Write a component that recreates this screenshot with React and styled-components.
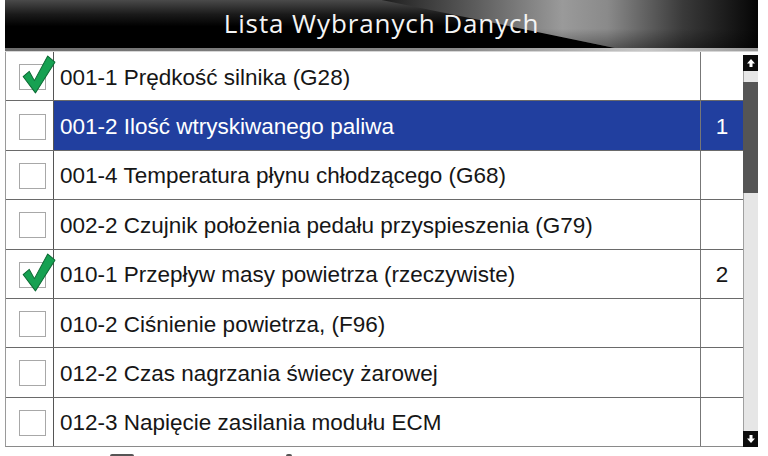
import { createGlobalStyle } from 'styled-components'
import styled from 'styled-components'

const rows = [
  { code: '001-1', name: 'Prędkość silnika (G28)', checked: true },
  { code: '001-2', name: 'Ilość wtryskiwanego paliwa', selected: true, order: '1' },
  { code: '001-4', name: 'Temperatura płynu chłodzącego (G68)' },
  { code: '002-2', name: 'Czujnik położenia pedału przyspieszenia (G79)' },
  { code: '010-1', name: 'Przepływ masy powietrza (rzeczywiste)', checked: true, order: '2' },
  { code: '010-2', name: 'Ciśnienie powietrza, (F96)' },
  { code: '012-2', name: 'Czas nagrzania świecy żarowej' },
  { code: '012-3', name: 'Napięcie zasilania modułu ECM' },
]

const GlobalStyle = createGlobalStyle`
  html, body {
    margin: 0;
    padding: 0;
    background: #ffffff;
  }
  * {
    box-sizing: border-box;
  }
`

const App = () => {
  return (
    <>
      <GlobalStyle />
      <Screen>
        <Header>
          <Title>Lista Wybranych Danych</Title>
        </Header>
        <HeaderRule />
        <Main>
          <Table>
            {rows.map((row) => (
              <Row key={row.code} selected={row.selected}>
                <CheckCell>
                  <Box />
                  {row.checked && (
                    <Tick viewBox="0 0 34 40">
                      <path
                        d="M2 21 L8 16 L13 25 L26 1 L33 7 L14 37 Z"
                        fill="#16a152"
                        stroke="#0c6b34"
                        strokeWidth="1"
                        strokeLinejoin="round"
                      />
                    </Tick>
                  )}
                </CheckCell>
                <NameCell>{row.code} {row.name}</NameCell>
                <OrderCell>{row.order}</OrderCell>
              </Row>
            ))}
          </Table>
          <Scrollbar>
            <ArrowButton>
              <svg width="10" height="10" viewBox="0 0 10 10">
                <path d="M5 1 L9 5.5 L6.5 5.5 L6.5 9 L3.5 9 L3.5 5.5 L1 5.5 Z" fill="#fff" />
              </svg>
            </ArrowButton>
            <Track>
              <Thumb />
            </Track>
            <ArrowButton>
              <svg width="10" height="10" viewBox="0 0 10 10">
                <path d="M5 9 L9 4.5 L6.5 4.5 L6.5 1 L3.5 1 L3.5 4.5 L1 4.5 Z" fill="#fff" />
              </svg>
            </ArrowButton>
          </Scrollbar>
        </Main>
        <Footer>
          <Peek width={24} />
          <Peek width={6} offset={176} />
        </Footer>
      </Screen>
    </>
  )
}

const Screen = styled.div`
  width: 768px;
  height: 456px;
  overflow: hidden;
  padding: 0 10px 0 5px;
  display: flex;
  flex-direction: column;
  font-family: 'Liberation Sans', Arial, sans-serif;
`

const Header = styled.div`
  position: relative;
  height: 48px;
  display: flex;
  align-items: center;
  justify-content: center;
  background: linear-gradient(180deg, #4a4a4a 0%, #1a1a1a 30%, #000 55%, #000 100%);
  &::before {
    content: '';
    position: absolute;
    inset: 0;
    clip-path: polygon(50% 0, 64% 45%, 81% 100%, 100% 100%, 100% 0);
    background:
      linear-gradient(180deg, rgba(0,0,0,0) 60%, rgba(0,0,0,0.35) 100%),
      linear-gradient(90deg, #1e1e1e 50%, #5a5a5a 62%, #9a9a9a 74%, #8a8a8a 80%, #3a3a3a 90%, #050505 100%);
  }
`

const Title = styled.h1`
  position: relative;
  margin: 0;
  padding-bottom: 2px;
  color: #f4f4f4;
  font-family: 'Open Sans', 'Noto Sans', sans-serif;
  font-weight: 400;
  font-size: 26px;
  letter-spacing: 0.9px;
`

const HeaderRule = styled.div`
  height: 4px;
  background: linear-gradient(90deg, #6e6e6e 0%, #8a8a8a 60%, #c8c8c8 85%, #9a9a9a 100%);
  border-bottom: 1px solid #d6d6d6;
`

const Main = styled.div`
  display: flex;
  height: 395px;
`

const Table = styled.div`
  flex: 1;
  display: flex;
  flex-direction: column;
  border-left: 1px solid #9a9a9a;
  border-bottom: 1px solid #8a8a8a;
`

const Row = styled.div`
  flex: 1;
  display: grid;
  grid-template-columns: 48px 647px 1fr;
  border-bottom: 1px solid #6a6a6a;
  background: ${({ selected }) => (selected ? '#213f9f' : '#ffffff')};
  color: ${({ selected }) => (selected ? '#ffffff' : '#161616')};
  &:last-child {
    border-bottom: none;
  }
`

const CheckCell = styled.div`
  position: relative;
  display: flex;
  align-items: center;
  justify-content: center;
  border-right: 1px solid #555;
  background: #ffffff;
`

const Box = styled.div`
  width: 27px;
  height: 26px;
  margin-left: 5px;
  margin-top: 2px;
  border: 1px solid #a8a8a8;
  background: #fff;
`

const Tick = styled.svg`
  position: absolute;
  left: 15px;
  top: 3px;
  width: 35px;
  height: 41px;
`

const NameCell = styled.div`
  display: flex;
  align-items: center;
  padding-left: 6px;
  padding-top: 3px;
  font-size: 22.5px;
  white-space: nowrap;
  border-right: 1px solid #777;
`

const OrderCell = styled.div`
  display: flex;
  align-items: center;
  justify-content: center;
  padding-top: 3px;
  font-size: 22.5px;
`

const Scrollbar = styled.div`
  width: 15px;
  padding-top: 3px;
  display: flex;
  flex-direction: column;
`

const ArrowButton = styled.div`
  height: 16px;
  background: #0c0c0c;
  display: flex;
  align-items: center;
  justify-content: center;
`

const Track = styled.div`
  flex: 1;
  padding-top: 11px;
  background: #e6e6e6;
  border-left: 1px solid #a0a0a0;
`

const Thumb = styled.div`
  height: 111px;
  margin-left: -1px;
  background: #555555;
`

const Footer = styled.div`
  flex: 1;
  position: relative;
`

const Peek = styled.span`
  position: absolute;
  bottom: 0;
  left: ${({ offset }) => 105 + (offset || 0)}px;
  width: ${({ width }) => width}px;
  height: 2px;
  border-radius: 3px 3px 0 0;
  background: #555;
`

export default App
